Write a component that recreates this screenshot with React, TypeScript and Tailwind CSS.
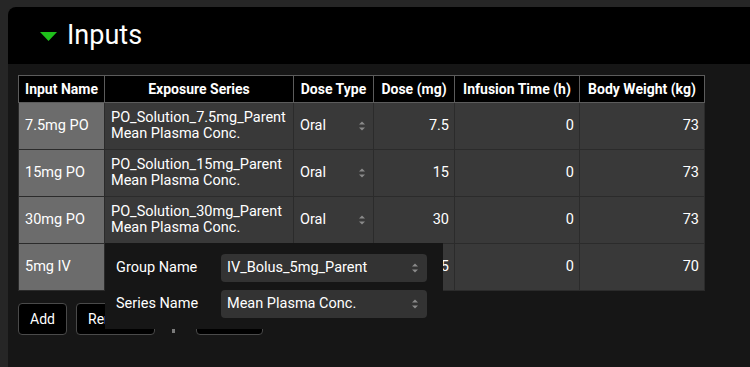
import React from 'react';

const rows = [
  { name: '7.5mg PO', group: 'PO_Solution_7.5mg_Parent', type: 'Oral', dose: '7.5', inf: '0', bw: '73' },
  { name: '15mg PO', group: 'PO_Solution_15mg_Parent', type: 'Oral', dose: '15', inf: '0', bw: '73' },
  { name: '30mg PO', group: 'PO_Solution_30mg_Parent', type: 'Oral', dose: '30', inf: '0', bw: '73' },
  { name: '5mg IV', group: '', type: '', dose: '5', inf: '0', bw: '70' },
];

const UpDown = () => (
  <svg width="8" height="12" viewBox="0 0 8 12" className="shrink-0">
    <path d="M1 4.5 L4 1.5 L7 4.5 Z" fill="#8a8a8a" />
    <path d="M1 7.5 L4 10.5 L7 7.5 Z" fill="#8a8a8a" />
  </svg>
);

const headers = ['Input Name', 'Exposure Series', 'Dose Type', 'Dose (mg)', 'Infusion Time (h)', 'Body Weight (kg)'];
const widths = ['w-[86px]', 'w-[189px]', 'w-[80px]', 'w-[81px]', 'w-[125px]', 'w-[125px]'];

export default function App() {
  return (
    <div className="h-screen w-full bg-[#262626] pl-2 pt-[7px] overflow-hidden" style={{ fontFamily: 'Roboto, "Liberation Sans", sans-serif' }}>
      <div className="h-full flex flex-col rounded-tl-lg overflow-hidden">
        {/* Header */}
        <div className="h-[57px] bg-black flex items-center pl-8 shrink-0">
          <svg width="17" height="9" viewBox="0 0 17 9" className="mr-[10px] mt-[2px]">
            <path d="M0 0 H17 L8.5 9 Z" fill="#1fc01b" />
          </svg>
          <span className="text-white text-[27px] leading-none">Inputs</span>
        </div>

        {/* Body */}
        <div className="flex-1 bg-[#161616] pl-[10px] pt-[11px]">
          <div className="relative w-[686px]">
            <table className="table-fixed border-collapse w-[686px] text-white">
              <thead>
                <tr className="h-[27px]">
                  {headers.map((h, i) => (
                    <th key={h} className={`${widths[i]} bg-black border border-[#5c5c5c] text-[14px] font-bold text-center px-0 whitespace-nowrap`}>
                      {h}
                    </th>
                  ))}
                </tr>
              </thead>
              <tbody>
                {rows.map((r) => (
                  <tr key={r.name} className="h-[47px] text-[14.5px]">
                    <td className="bg-[#6c6c6c] border border-[#2b2b2b] px-[6px]">{r.name}</td>
                    <td className="bg-[#393939] border border-[#2b2b2b] px-[6px] leading-[16px] whitespace-nowrap overflow-hidden">
                      {r.group && (
                        <>
                          <div>{r.group}</div>
                          <div>Mean Plasma Conc.</div>
                        </>
                      )}
                    </td>
                    <td className="bg-[#393939] border border-[#2b2b2b] pl-[6px] pr-[7px]">
                      {r.type && (
                        <div className="flex items-center justify-between">
                          <span>{r.type}</span>
                          <UpDown />
                        </div>
                      )}
                    </td>
                    <td className="bg-[#393939] border border-[#2b2b2b] px-[5px] text-right">{r.dose}</td>
                    <td className="bg-[#393939] border border-[#2b2b2b] px-[5px] text-right">{r.inf}</td>
                    <td className="bg-[#393939] border border-[#2b2b2b] px-[5px] text-right">{r.bw}</td>
                  </tr>
                ))}
              </tbody>
            </table>

            {/* Buttons */}
            <div className="flex items-center mt-3 text-white text-[14px]">
              <button className="h-8 w-[49px] bg-black border border-[#4a4a4a] rounded">Add</button>
              <button className="h-8 w-[79px] ml-[9px] bg-black border border-[#4a4a4a] rounded text-left pl-[11px]">Remove</button>
              <div className="ml-[17px] mt-[22px] w-[3px] h-[6px] bg-[#7a7a7a]" />
              <button className="h-8 w-[67px] ml-[21px] bg-black border border-[#4a4a4a] rounded">Edit</button>
            </div>

            {/* Popover */}
            <div className="absolute left-[87px] top-[168px] w-[338px] h-[86px] bg-[#161616] text-white text-[14.5px] pl-[11px] pr-4 pt-[11px] flex flex-col gap-2">
              <div className="flex items-center">
                <span className="w-[105px]">Group Name</span>
                <div className="w-[206px] h-7 bg-[#333333] rounded flex items-center justify-between pl-[6px] pr-[8px]">
                  <span>IV_Bolus_5mg_Parent</span>
                  <UpDown />
                </div>
              </div>
              <div className="flex items-center">
                <span className="w-[105px]">Series Name</span>
                <div className="w-[206px] h-7 bg-[#333333] rounded flex items-center justify-between pl-[6px] pr-[8px]">
                  <span>Mean Plasma Conc.</span>
                  <UpDown />
                </div>
              </div>
            </div>
          </div>
        </div>
      </div>
    </div>
  );
}
